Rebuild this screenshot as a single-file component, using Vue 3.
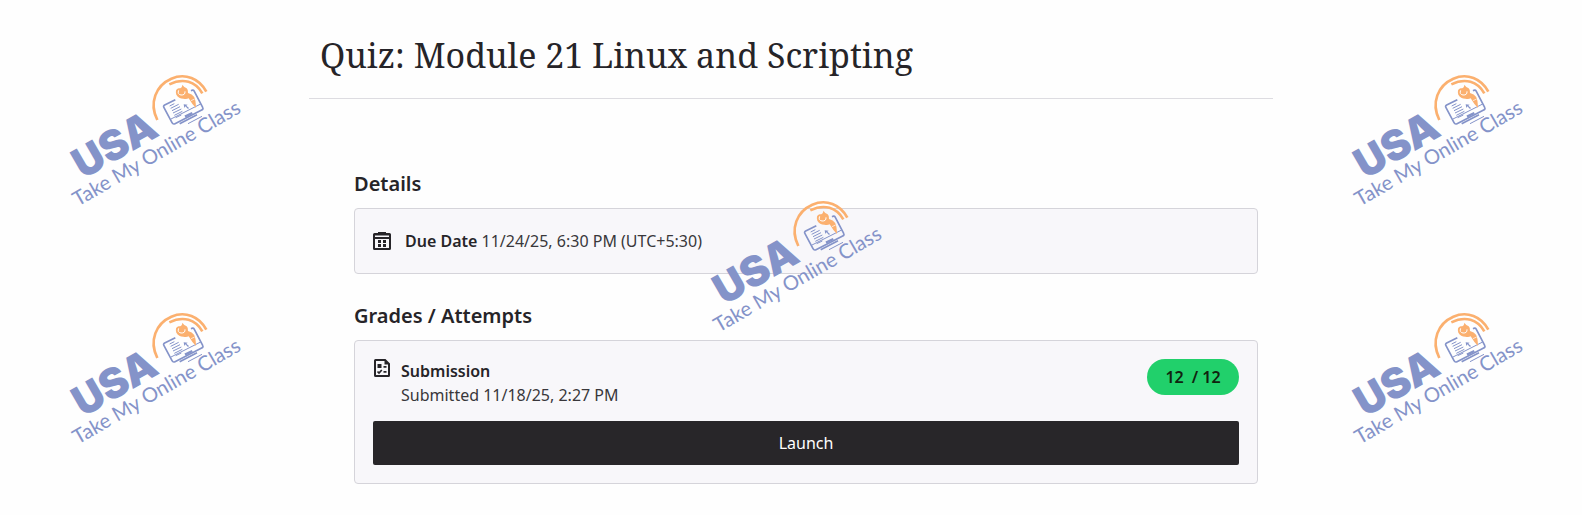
<template>
  <div class="page">
    <main class="panel">
      <header class="panel-header">
        <h1>{{ quiz.title }}</h1>
      </header>

      <div class="panel-body">
        <section>
          <h2>Details</h2>
          <div class="card due-card">
            <svg class="icon" viewBox="0 0 18 18" width="18" height="18" aria-hidden="true">
              <path d="M5 0h8v1h3.500a1.500 1.500 0 0 1 1.500 1.500V16.500a1.500 1.500 0 0 1-1.500 1.500h-15A1.500 1.500 0 0 1 0 16.500V2.500A1.500 1.500 0 0 1 1.500 1H5z" fill="#262428" />
              <path d="M2 3.500h14v1.500H2zM2 7h14v9H2z" fill="#f8f7fa" />
              <path d="M5 8h3v3H5zM10 8h3v3h-3zM5 12h3v3H5zM10 12h3v3h-3z" fill="#262428" />
            </svg>
            <p><strong>Due Date</strong> {{ quiz.dueDate }}</p>
          </div>
        </section>

        <section>
          <h2>Grades / Attempts</h2>
          <div class="card">
            <div class="attempt">
              <svg class="icon" viewBox="0 0 18 18" width="18" height="18" aria-hidden="true">
                <path d="M2.500 0H12.500L17 4.500V16.500a1.500 1.500 0 0 1-1.500 1.500h-13A1.500 1.500 0 0 1 1 16.500v-15A1.500 1.500 0 0 1 2.500 0z" fill="#262428" />
                <path d="M3 2h8.500v3.500H15V16H3z" fill="#f8f7fa" />
                <path d="M4.500 5h4v4h-4zM10.500 7h3v1.700h-3zM10.500 12h3v1.700h-3z" fill="#262428" />
                <path d="M4.500 12.500l1.500 1.500 2.800-3" fill="none" stroke="#262428" stroke-width="1.700" />
              </svg>
              <div class="attempt-text">
                <p><strong>Submission</strong></p>
                <p>Submitted {{ quiz.submitted }}</p>
              </div>
              <div class="grade"><span>{{ quiz.score }}</span><span>/ {{ quiz.total }}</span></div>
            </div>
            <button type="button" class="launch">Launch</button>
          </div>
        </section>
      </div>
    </main>

    <div class="watermarks" aria-hidden="true">
      <svg v-for="place in marks" :key="place" class="mark" :class="place" viewBox="0 0 630 480">
        <g transform="rotate(-30)" fill="#8493c9">
          <text class="mark-name" x="-94" y="361">USA</text>
          <text class="mark-tag" x="-148" y="423">Take My Online Class</text>
        </g>
        <g fill="none" stroke="#fbb06f" stroke-width="8">
          <path d="M322 180C296 128 318 76 364 56C406 38 448 56 469 95" />
          <path d="M358 73C400 53 436 64 457 100" />
        </g>
        <!-- monitor -->
        <g fill="none" stroke="#8493c9" stroke-width="5" stroke-linejoin="round">
          <path d="M376 119L344 135Q339 138 342 143L366 188Q369 194 375 191L455 150Q461 147 458 142L433 94Q430 88 423 92" />
          <path d="M363 177L452 132" stroke-width="3" />
          <path d="M389 191L441 164" />
          <path d="M414 191L456 169" stroke-width="3" />
          <path d="M405 170L427 159" stroke-width="7" />
        </g>
        <g fill="none" stroke="#8493c9" stroke-width="3">
          <path d="M359 138L373 131M362 145L386 133M366 152L390 140M369 159L394 147M373 166L397 154M377 173L394 165" />
        </g>
        <path d="M401 133l12 1-4 3 8 7-3 3-8-8-3 5z" fill="#8493c9" />
        <!-- torch -->
        <path d="M397 74Q404 84 410 85Q416 91 414 99Q427 102 432 110Q437 116 438 144Q426 133 416 115Q410 118 400 116Q386 116 379 104Q374 88 386 85Q397 85 397 74Z" fill="#fbb06f" />
        <path d="M386 91Q381 103 393 105Q406 106 405 94" fill="none" stroke="#fff" stroke-width="3" />
        <path d="M423 122L434 117" fill="none" stroke="#fff" stroke-width="2" />
      </svg>
    </div>
  </div>
</template>

<script setup>
const quiz = {
  title: 'Quiz: Module 21 Linux and Scripting',
  dueDate: '11/24/25, 6:30 PM (UTC+5:30)',
  submitted: '11/18/25, 2:27 PM',
  score: 12,
  total: 12
};

const marks = ['top-left', 'top-right', 'center', 'bottom-left', 'bottom-right'];
</script>

<style>
body {
  margin: 0;
  background-color: #fefefe;
}
</style>

<style scoped>
.page {
  position: relative;
  min-height: 100vh;
  color: #262428;
  font-family: "Noto Sans", sans-serif;
  font-size: 16px;
  line-height: 24px;
}

.panel {
  max-width: 964px;
  margin: 0 auto;
}

.panel-header {
  padding: 31px 11px 19px;
  border-bottom: 1px solid #dddce1;
}

h1,
h2,
p {
  margin: 0;
}

h1 {
  font-family: "Noto Serif", "DejaVu Serif Condensed", "DejaVu Serif", serif;
  font-size: 34px;
  font-weight: 400;
  line-height: 48px;
}

.panel-body {
  display: flex;
  flex-direction: column;
  gap: 28px;
  padding: 71px 15px 32px 45px;
}

h2 {
  margin-bottom: 10px;
  font-size: 20px;
  font-weight: 600;
  line-height: 28px;
}

p {
  color: #39373b;
}

strong {
  color: #262428;
  font-weight: 600;
}

.card {
  padding: 18px;
  background-color: #f8f7fa;
  border: 1px solid #d5d4da;
  border-radius: 4px;
}

.due-card {
  display: flex;
  align-items: center;
  gap: 14px;
  padding: 20px 18px;
}

.icon {
  flex: none;
}

.attempt {
  display: flex;
  align-items: flex-start;
  gap: 10px;
  margin-bottom: 14px;
}

.attempt-text {
  flex: 1;
}

.grade {
  display: flex;
  gap: 8px;
  justify-content: center;
  box-sizing: border-box;
  min-width: 92px;
  padding: 6px 16px;
  background-color: #21d06b;
  border-radius: 18px;
  color: #10240f;
  font-weight: 600;
}

.launch {
  display: block;
  width: 100%;
  padding: 10px;
  background-color: #282629;
  border: none;
  border-radius: 2px;
  color: #fff;
  font: inherit;
  cursor: pointer;
}

.watermarks {
  position: absolute;
  inset: 0;
  overflow: hidden;
  pointer-events: none;
}

.mark {
  position: absolute;
  width: 210px;
  height: 160px;
}

.top-left {
  top: 60px;
  left: 50px;
}

.top-right {
  top: 60px;
  right: 40px;
}

.center {
  top: 186px;
  left: calc(50% - 100px);
}

.bottom-left {
  top: 298px;
  left: 50px;
}

.bottom-right {
  top: 298px;
  right: 40px;
}

.mark-name {
  font-family: Inter, sans-serif;
  font-size: 125px;
  font-weight: 900;
}

.mark-tag {
  font-family: Lato, sans-serif;
  font-size: 61px;
}
</style>
